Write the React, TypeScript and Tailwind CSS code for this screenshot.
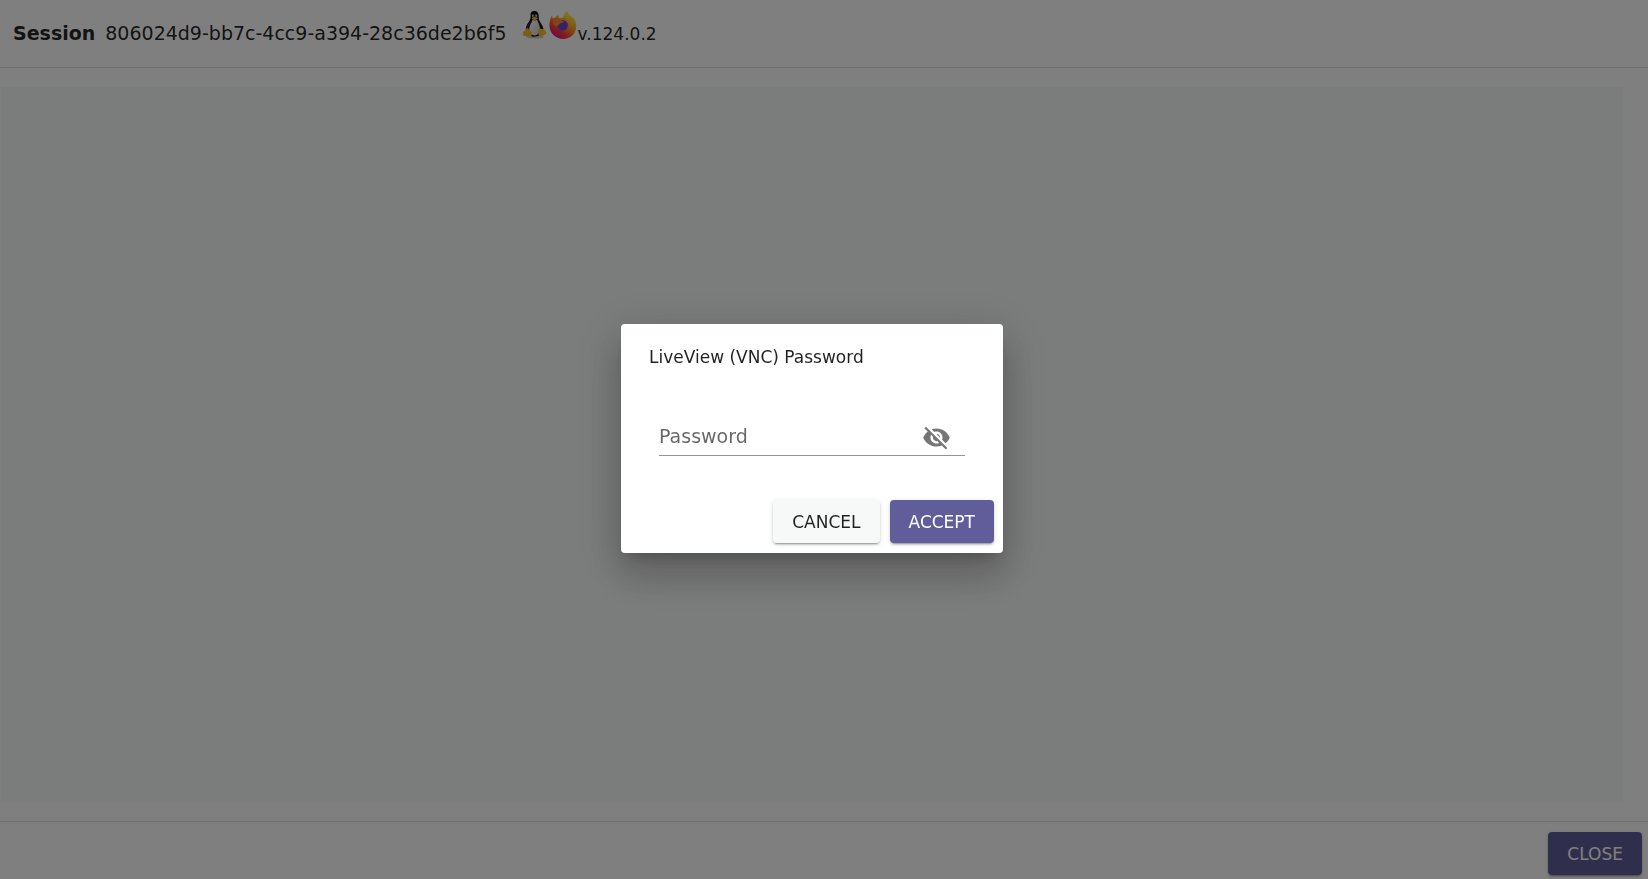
import { useState } from "react";
import { MdVisibility, MdVisibilityOff } from "react-icons/md";

const raised =
  "shadow-[0px_3px_1px_-2px_rgba(0,0,0,0.2),0px_2px_2px_0px_rgba(0,0,0,0.14),0px_1px_5px_0px_rgba(0,0,0,0.12)]";

function LinuxIcon() {
  return (
    <svg viewBox="0 0 28 28" className="size-7" role="img" aria-label="Linux">
      <defs>
        <linearGradient id="belly" x1="0" y1="0" x2="1" y2="1">
          <stop offset="0" stopColor="#ffffff" />
          <stop offset="1" stopColor="#cfcfcf" />
        </linearGradient>
        <linearGradient id="feet" x1="0" y1="0" x2="0.7" y2="1">
          <stop offset="0" stopColor="#f7a250" />
          <stop offset="1" stopColor="#f9c222" />
        </linearGradient>
      </defs>
      <ellipse cx="14" cy="26" rx="9" ry="1.6" fill="#000" opacity="0.2" />
      <path
        d="M13.500 0c-3.100 0-4.100 2-4 4.500.1 2.300.1 3.500-1.100 5.300-1.400 2.100-3.200 4.800-3.600 7.600-.3 2.600 1.200 5.600 3.400 7.200 2.900 1.500 7.200 1.500 10.300 0 2.400-1.300 4.200-3.600 4-6.400-.3-3.300-2.600-5.400-4-8.200-.9-1.800-.6-3.300-.8-5.200C17.500 1.600 16.300 0 13.500 0z"
        fill="#111214"
      />
      <path
        d="M11.500 8.800c1.500 1.200 3.300.9 4.500-.2.700 2.600 2.800 4.800 2.900 8.400.1 3.900-1.600 7.400-5.100 7.400-3.800 0-5.700-3.100-5.500-6.900.2-3.400 2.400-5.500 3.200-8.700z"
        fill="url(#belly)"
      />
      <ellipse cx="12" cy="4.900" rx="1" ry="1.300" fill="#ddd" />
      <ellipse cx="15" cy="4.900" rx="1.200" ry="1.400" fill="#ddd" />
      <circle cx="12.300" cy="5.100" r=".6" fill="#111" />
      <circle cx="14.700" cy="5.100" r=".65" fill="#111" />
      <path
        d="M10.700 7.200c.9-.8 1.700-1.500 2.800-1.500 1.200 0 2.400.8 3.300 1.300-.7 1.300-2 2.200-3.300 2.200-1.200 0-2.200-.9-2.800-2z"
        fill="#f3b62b"
      />
      <path
        d="M5.800 17c1.300-.3 2.400 1.100 3.200 2.300.8 1.300 2.500 3.100 1.900 4.700-.6 1.600-2.900 1.900-4.700 1.500-1.500-.4-3.500-.5-4.200-1.300-.5-.9.200-1.900.1-3.100.3-1 1.600-.8 2.200-1.500.4-.6.900-2.400 1.500-2.600z"
        fill="url(#feet)"
      />
      <path
        d="M17.700 19c.2-1.300 1.200-1.700 2.100-1.200 1 .5 2.100.4 2.800-.3.900.4.900 1.800 1.500 2.600.5.700 1.600 1.300 1.300 2.200-.5 1.100-2.100 1.400-3.300 2.300-1.300.9-3.100 1.300-4.100 0s-.3-3.900-.3-5.600z"
        fill="#f7c024"
      />
      <path d="M9.100 11.800c-1.500 1.700-2.300 3.100-2.500 5" stroke="#777" strokeWidth=".6" fill="none" />
    </svg>
  );
}

function FirefoxIcon() {
  return (
    <svg viewBox="0 0 28 28" className="size-7" role="img" aria-label="Firefox">
      <defs>
        <linearGradient id="flame" x1="0.85" y1="0.1" x2="0.25" y2="0.95">
          <stop offset="0.05" stopColor="#fff044" />
          <stop offset="0.3" stopColor="#ffb52a" />
          <stop offset="0.55" stopColor="#ff7a2a" />
          <stop offset="0.76" stopColor="#ff3647" />
          <stop offset="1" stopColor="#e31587" />
        </linearGradient>
        <radialGradient id="globe" cx="0.45" cy="0.6" r="0.6">
          <stop offset="0" stopColor="#4f4fd8" />
          <stop offset="0.55" stopColor="#6a42dc" />
          <stop offset="1" stopColor="#9a34cc" />
        </radialGradient>
        <linearGradient id="tail" x1="0.6" y1="0" x2="0.5" y2="1">
          <stop offset="0" stopColor="#fff25a" />
          <stop offset="0.5" stopColor="#ffd32e" />
          <stop offset="1" stopColor="#ff8a2a" />
        </linearGradient>
      </defs>
      <path
        d="M3.200 4.200c-.1 1.200.1 2.300.5 3.100.7-.4 1.500-.6 2.500-.6 1-1.200 2-2.100 3.300-2.700-.2 1 0 2.200.6 3l4.200-.3c.3-2.900 1.400-5 3.900-6.700.3 2.600 2.100 4 4 5.600.9.800 1.400 1.600 1.700 2.500.2-.7.200-1.300 0-2.200 2.700 3.300 3.600 7.300 3.300 10.900C26.500 23.300 21 28 14 28 6.500 28 .5 22 .5 14.600c0-3.900.9-7.700 2.700-10.400z"
        fill="url(#flame)"
      />
      <circle cx="13.600" cy="14.200" r="5.300" fill="url(#globe)" />
      <path
        d="M18.200 0c-2.700 1.700-3.900 4.100-4.100 6.900 3.200.3 5.300 2.500 5.700 5.400.4 2.700.1 5.200-1.700 7 4.800-1.500 7.500-5.500 6.700-9.700-.3-1.600-1.200-2.900-2.500-4-1.900-1.700-3.800-3-4.100-5.600z"
        fill="url(#tail)"
        opacity="0.8"
      />
      <path
        d="M3.700 7.500c1.800-.9 4.300-.6 6.400.4 1.700.8 2.700 1.700 4.700 1.900-.4 1.600-1.400 2-3.200 2.500-1.200.4-1.700 1-1.900 2.200-1.500-.2-2.100.2-2.500 1.500-1.900-1.500-3.800-5.100-3.500-8.500z"
        fill="#ff8f28"
      />
    </svg>
  );
}

export default function App() {
  const [visible, setVisible] = useState(false);
  const Eye = visible ? MdVisibility : MdVisibilityOff;
  return (
    <div className="flex h-screen flex-col bg-white font-['DejaVu_Sans',sans-serif] text-black/87">
      <header className="flex h-17 shrink-0 items-baseline border-b border-black/12 px-[13px] pt-[11px]">
        <h1 className="flex items-center gap-2.5 pt-2 text-[19px] leading-7">
          <span className="font-bold">Session</span>
          <span>806024d9-bb7c-4cc9-a394-28c36de2b6f5</span>
        </h1>
        <div className="mr-px ml-3.5 flex self-start">
          <LinuxIcon />
          <FirefoxIcon />
        </div>
        <span className="text-[17px] leading-7">v.124.0.2</span>
      </header>
      <main className="flex min-h-0 grow py-[19px] pr-[25px] pl-px">
        <div className="grow bg-[#f7f9f8]" />
      </main>
      <footer className="flex h-[58px] shrink-0 items-start justify-end border-t border-black/12 px-1.5 pt-2.5">
        <button type="button" className={`h-[43px] rounded bg-[#615d9a] px-[19px] pt-0.5 text-[17px] text-white ${raised}`}>
          CLOSE
        </button>
      </footer>

      <div className="fixed inset-0 flex items-center justify-center bg-black/50 pr-6 pb-0.5">
        <div
          role="dialog"
          aria-modal="true"
          aria-labelledby="dialog-title"
          className="w-[382px] rounded bg-white shadow-[0px_11px_15px_-7px_rgba(0,0,0,0.2),0px_24px_38px_3px_rgba(0,0,0,0.14),0px_9px_46px_8px_rgba(0,0,0,0.12)]"
        >
          <h2 id="dialog-title" className="px-7 pt-[19px] pb-px text-[17px] leading-7">
            LiveView (VNC) Password
          </h2>
          <form onSubmit={(e) => e.preventDefault()}>
            <div className="mx-[38px] mt-11 flex h-10 items-center border-b border-black/42 pt-0.5 pr-3.5">
              <input
                type={visible ? "text" : "password"}
                aria-label="Password"
                placeholder="Password"
                className="min-w-0 grow bg-transparent text-[19px] outline-none placeholder:text-black/60"
              />
              <button
                type="button"
                aria-label="Toggle password visibility"
                onClick={() => setVisible(!visible)}
                className="pt-0.5 text-black/54"
              >
                <Eye size={29} />
              </button>
            </div>
            <div className="flex justify-end gap-2.5 px-[9px] pt-11 pb-2.5">
              <button type="button" className={`h-[43px] rounded bg-[#f7f9f8] px-[19px] pt-0.5 text-[17px] ${raised}`}>
                CANCEL
              </button>
              <button type="submit" className={`h-[43px] rounded bg-[#615d9a] px-[19px] pt-0.5 text-[17px] text-white ${raised}`}>
                ACCEPT
              </button>
            </div>
          </form>
        </div>
      </div>
    </div>
  );
}
